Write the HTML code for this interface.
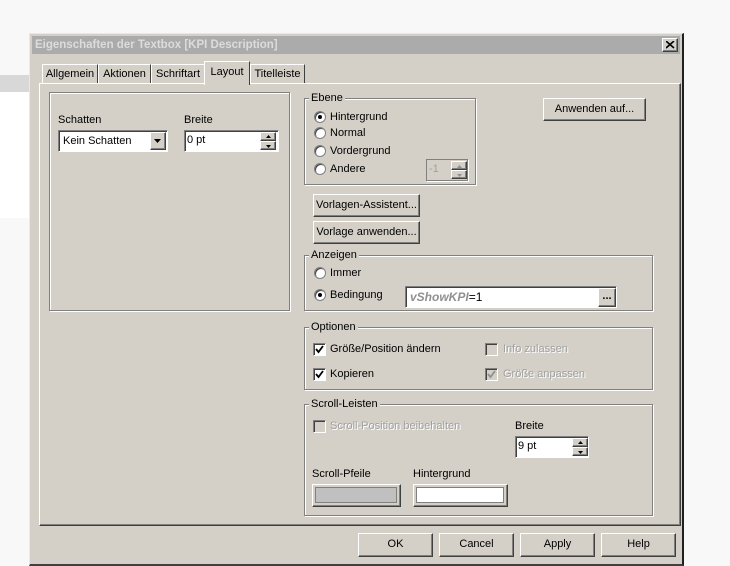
<!DOCTYPE html>
<html><head><meta charset="utf-8"><style>
*{box-sizing:border-box;margin:0;padding:0}
body{width:730px;height:566px;background:#f8f8f8;position:relative;overflow:hidden;font-family:"Liberation Sans",sans-serif;font-size:11px;color:#000}
.a{position:absolute}
.dlg{left:29px;top:33px;width:655px;height:533px;background:#d4d0c8;border-top:1px solid #e8e8e8;border-left:1px solid #e8e8e8;border-right:2px solid #202020;border-bottom:2px solid #404040}
.title{left:2px;top:2px;width:648px;height:18px;background:#ababab;color:#dcdcdc;font-weight:bold;font-size:11.5px;padding:3px 0 0 3px}
.raised{background:#d4d0c8;border-top:1px solid #fff;border-left:1px solid #fff;border-right:1px solid #404040;border-bottom:1px solid #404040;box-shadow:inset -1px -1px 0 #808080}
.sunken{background:#fff;border-top:1px solid #808080;border-left:1px solid #808080;border-right:1px solid #fff;border-bottom:1px solid #fff;box-shadow:inset 1px 1px 0 #404040}
.grp{border:1px solid #808080;box-shadow:1px 1px 0 #fff, inset 1px 1px 0 #fff}
.lg{background:#d4d0c8;padding:0 2px;line-height:12px}
.btn{text-align:center;line-height:20px}
.tab{top:30px;height:20px;border-top:1px solid #fff;border-left:1px solid #fff;border-right:1px solid #404040;padding-top:3px;text-align:center;background:#d4d0c8}
.radio{width:12px;height:12px;border-radius:50%;background:#fff;border:1px solid #808080;box-shadow:inset 1px 1px 0 #404040}
.radio.on::after{content:"";position:absolute;left:3px;top:3px;width:4px;height:4px;border-radius:50%;background:#000}
.cb{width:13px;height:13px;background:#fff;border-top:1px solid #808080;border-left:1px solid #808080;border-right:1px solid #fff;border-bottom:1px solid #fff;box-shadow:inset 1px 1px 0 #404040}
.cb.dis{background:#d4d0c8}
.dis{color:#a0a0a0;text-shadow:1px 1px 0 #fff}
.spin{width:16px;height:18px}
.spin div{position:absolute;left:0;width:16px;height:9px}
</style></head><body>
<div class="a" style="left:0;top:75px;width:29px;height:17px;background:#d8d8d8"></div>
<div class="a" style="left:0;top:92px;width:29px;height:126px;background:#fff"></div>

<div class="a dlg">
 <div class="a title">Eigenschaften der Textbox [KPI Description]</div>
 <div class="a raised" style="left:632px;top:4px;width:16px;height:14px"><svg class="a" style="left:3px;top:2px" width="9" height="8"><path d="M0 0L8 7M8 0L0 7" stroke="#000" stroke-width="1.6"/></svg></div>

 <div class="a tab" style="left:12px;width:56px">Allgemein</div>
 <div class="a tab" style="left:68px;width:53px">Aktionen</div>
 <div class="a tab" style="left:121px;width:54px">Schriftart</div>
 <div class="a tab" style="left:220px;width:55px">Titelleiste</div>
 <div class="a" style="left:9px;top:49px;width:642px;height:443px;border-top:1px solid #fff;border-left:1px solid #fff;border-right:1px solid #404040;border-bottom:1px solid #404040;box-shadow:inset -1px -1px 0 #808080"></div>
 <div class="a tab" style="left:174px;top:27px;width:46px;height:24px;padding-top:4px;z-index:2">Layout</div>

 <div class="a grp" style="left:19px;top:58px;width:241px;height:219px"></div>
 <div class="a" style="left:28px;top:80px">Schatten</div>
 <div class="a" style="left:154px;top:80px">Breite</div>
 <div class="a sunken" style="left:28px;top:96px;width:110px;height:22px;padding:4px 4px">Kein Schatten</div>
 <div class="a raised" style="left:120px;top:98px;width:16px;height:18px"><svg class="a" style="left:3px;top:6px" width="8" height="5"><path d="M0 0H7L3.5 4Z" fill="#000"/></svg></div>
 <div class="a sunken" style="left:154px;top:96px;width:95px;height:22px;padding:3px 2px">0 pt</div>
 <div class="a spin" style="left:230px;top:98px"><div class="raised" style="top:0"><svg class="a" style="left:5px;top:2px" width="5" height="3"><path d="M0 3H5L2.5 0Z"/></svg></div><div class="raised" style="top:9px"><svg class="a" style="left:5px;top:3px" width="5" height="3"><path d="M0 0H5L2.5 3Z"/></svg></div></div>

 <div class="a grp" style="left:274px;top:64px;width:172px;height:87px"></div>
 <div class="a lg" style="left:279px;top:58px">Ebene</div>
 <div class="a radio on" style="left:284px;top:77px"></div><div class="a" style="left:300px;top:77px">Hintergrund</div>
 <div class="a radio" style="left:284px;top:93px"></div><div class="a" style="left:300px;top:93px">Normal</div>
 <div class="a radio" style="left:284px;top:111px"></div><div class="a" style="left:300px;top:111px">Vordergrund</div>
 <div class="a radio" style="left:284px;top:129px"></div><div class="a" style="left:300px;top:129px">Andere</div>
 <div class="a" style="left:396px;top:125px;width:42px;height:22px;border:1px solid #808080;box-shadow:1px 1px 0 #fff;padding:3px 2px;color:#a0a0a0">-1</div>
 <div class="a spin" style="left:421px;top:127px;height:18px"><div class="raised" style="top:0"><svg class="a" style="left:5px;top:3px" width="5" height="3"><path d="M0 3H5L2.5 0Z" fill="#909090"/></svg></div><div class="raised" style="top:9px"><svg class="a" style="left:5px;top:3px" width="5" height="3"><path d="M0 0H5L2.5 3Z" fill="#909090"/></svg></div></div>

 <div class="a raised btn" style="left:513px;top:64px;width:103px;height:23px">Anwenden auf...</div>
 <div class="a raised btn" style="left:283px;top:160px;width:107px;height:23px">Vorlagen-Assistent...</div>
 <div class="a raised btn" style="left:283px;top:187px;width:107px;height:23px">Vorlage anwenden...</div>

 <div class="a grp" style="left:274px;top:221px;width:349px;height:56px"></div>
 <div class="a lg" style="left:279px;top:215px">Anzeigen</div>
 <div class="a radio" style="left:284px;top:233px"></div><div class="a" style="left:300px;top:233px">Immer</div>
 <div class="a radio on" style="left:284px;top:255px"></div><div class="a" style="left:300px;top:255px">Bedingung</div>
 <div class="a sunken" style="left:375px;top:252px;width:212px;height:22px;padding:3px 4px;font-size:12px"><i style="color:#909090;font-weight:bold">vShowKPI</i>=1</div>
 <div class="a raised" style="left:568px;top:254px;width:18px;height:19px;text-align:center;line-height:14px;font-weight:bold">...</div>

 <div class="a grp" style="left:274px;top:293px;width:349px;height:63px"></div>
 <div class="a lg" style="left:279px;top:287px">Optionen</div>
 <div class="a cb" style="left:283px;top:309px"><svg class="a" style="left:1px;top:1px" width="9" height="9"><path d="M1 4L3.5 7L8 1" stroke="#000" stroke-width="1.8" fill="none"/></svg></div><div class="a" style="left:300px;top:309px">Größe/Position ändern</div>
 <div class="a cb" style="left:283px;top:334px"><svg class="a" style="left:1px;top:1px" width="9" height="9"><path d="M1 4L3.5 7L8 1" stroke="#000" stroke-width="1.8" fill="none"/></svg></div><div class="a" style="left:300px;top:334px">Kopieren</div>
 <div class="a cb dis" style="left:455px;top:309px"></div><div class="a dis" style="left:473px;top:309px">Info zulassen</div>
 <div class="a cb dis" style="left:455px;top:334px"><svg class="a" style="left:1px;top:1px" width="9" height="9"><path d="M1 4L3.5 7L8 1" stroke="#909090" stroke-width="1.8" fill="none"/></svg></div><div class="a dis" style="left:473px;top:334px">Größe anpassen</div>

 <div class="a grp" style="left:274px;top:370px;width:349px;height:112px"></div>
 <div class="a lg" style="left:279px;top:364px">Scroll-Leisten</div>
 <div class="a cb dis" style="left:283px;top:386px"></div><div class="a dis" style="left:300px;top:386px">Scroll-Position beibehalten</div>
 <div class="a" style="left:485px;top:386px">Breite</div>
 <div class="a sunken" style="left:485px;top:402px;width:74px;height:22px;padding:3px 2px">9 pt</div>
 <div class="a spin" style="left:542px;top:404px"><div class="raised" style="top:0"><svg class="a" style="left:5px;top:2px" width="5" height="3"><path d="M0 3H5L2.5 0Z"/></svg></div><div class="raised" style="top:9px"><svg class="a" style="left:5px;top:3px" width="5" height="3"><path d="M0 0H5L2.5 3Z"/></svg></div></div>
 <div class="a" style="left:282px;top:434px">Scroll-Pfeile</div>
 <div class="a" style="left:383px;top:434px">Hintergrund</div>
 <div class="a raised" style="left:282px;top:450px;width:89px;height:23px"><div class="a" style="left:2px;top:2px;width:82px;height:16px;background:#c0c0c0;border:1px solid #808080"></div></div>
 <div class="a raised" style="left:383px;top:450px;width:95px;height:23px"><div class="a" style="left:2px;top:2px;width:88px;height:16px;background:#fff;border:1px solid #808080"></div></div>

 <div class="a raised btn" style="left:328px;top:499px;width:75px;height:24px">OK</div>
 <div class="a raised btn" style="left:409px;top:499px;width:75px;height:24px">Cancel</div>
 <div class="a raised btn" style="left:490px;top:499px;width:75px;height:24px">Apply</div>
 <div class="a raised btn" style="left:571px;top:499px;width:75px;height:24px">Help</div>
</div>
</body></html>
